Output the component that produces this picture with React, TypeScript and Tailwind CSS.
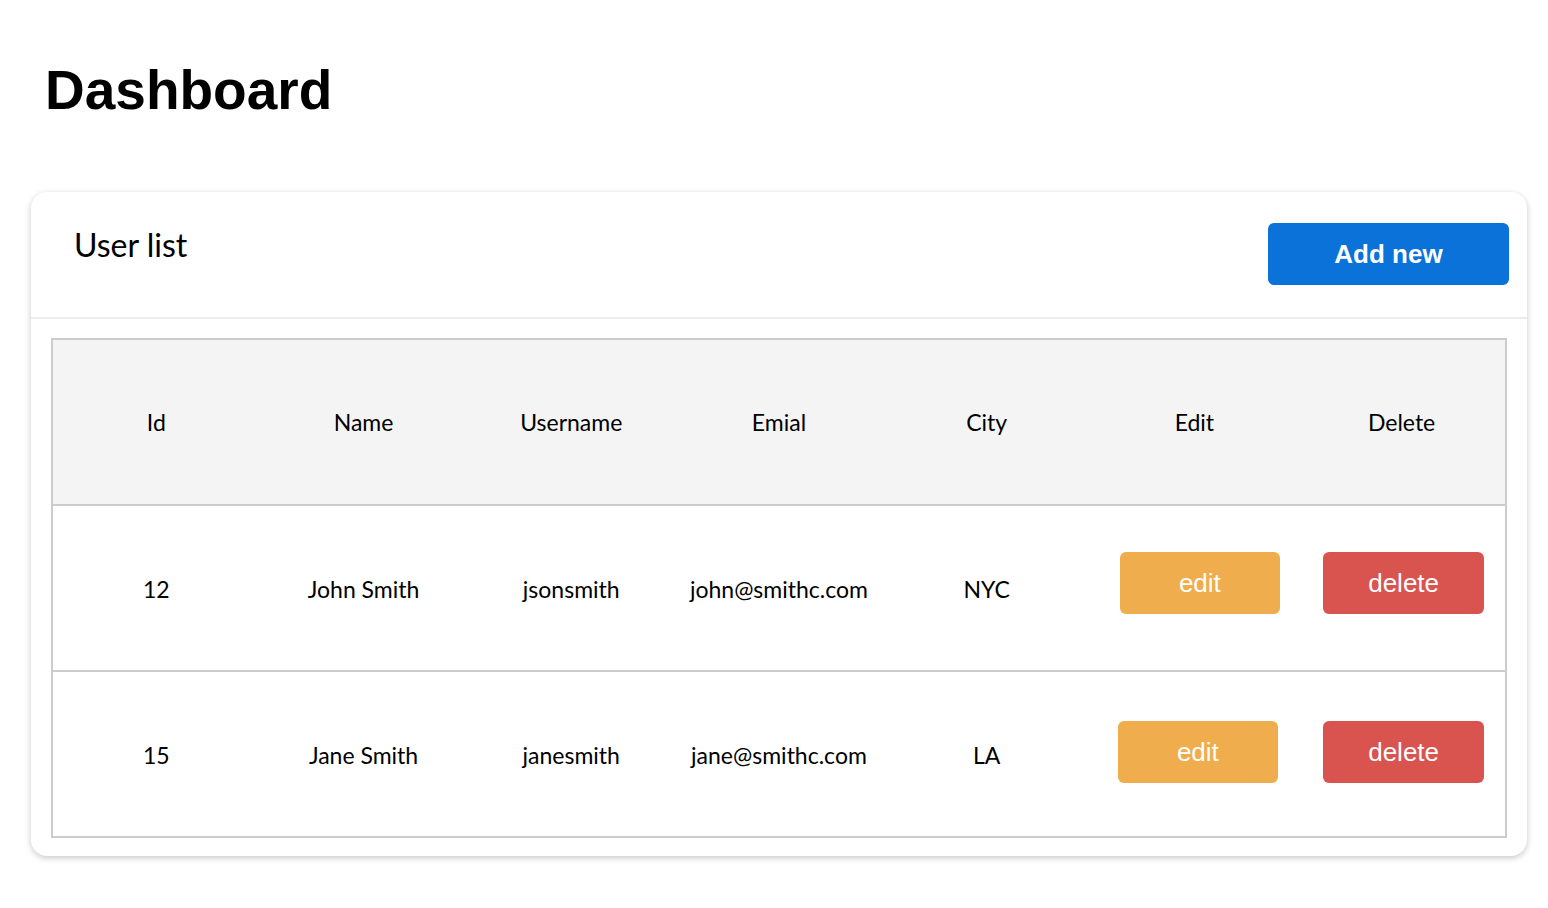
const users = [
  { id: 12, name: "John Smith", username: "jsonsmith", email: "john@smithc.com", city: "NYC", editCell: "pl-[11px] pb-[10px]", deleteCell: "pl-[4px] pb-[10px]" },
  { id: 15, name: "Jane Smith", username: "janesmith", email: "jane@smithc.com", city: "LA", editCell: "pl-[7px] pb-[4px]", deleteCell: "pl-[4px] pb-[4px]" },
];

const headings = ["Id", "Name", "Username", "Emial", "City", "Edit", "Delete"];

function App() {
  return (
    <div className="min-h-[908px] bg-white px-[31px] pt-[58px] pb-[52px]">
      <h1 className="pl-[14px] font-['Liberation_Sans',Arial,sans-serif] text-[55px] font-bold leading-[64px] text-black">
        Dashboard
      </h1>

      <div className="mt-[70px] w-[1496px] rounded-2xl bg-white shadow-[0_2px_6px_rgba(0,0,0,0.22)] font-['Lato',sans-serif]">
        <div className="flex items-start justify-between border-b-2 border-[#ececec] pr-[18px] pl-[43px] pt-[31px] pb-[32px]">
          <h2 className="pt-[2px] text-[32px] leading-[40px] text-black">User list</h2>
          <button className="h-[62px] w-[241px] rounded-md bg-[#0a72d8] font-['Liberation_Sans',Arial,sans-serif] text-[26px] font-bold text-white">
            Add new
          </button>
        </div>

        <div className="px-[20px] pt-[19px] pb-[18px]">
          <table className="w-full table-fixed border-collapse border-2 border-[#cccccc] text-[23px] text-black">
            <thead>
              <tr className="h-[166px] bg-[#f4f4f4]">
                {headings.map((h) => (
                  <th key={h} className="text-center font-normal">
                    {h}
                  </th>
                ))}
              </tr>
            </thead>
            <tbody>
              {users.map((u) => (
                <tr key={u.id} className="h-[166px] border-t-2 border-[#cccccc]">
                  <td className="pt-[2px] text-center">{u.id}</td>
                  <td className="pt-[2px] text-center">{u.name}</td>
                  <td className="pt-[2px] text-center">{u.username}</td>
                  <td className="pt-[2px] text-center">{u.email}</td>
                  <td className="pt-[2px] text-center">{u.city}</td>
                  <td className={`text-center ${u.editCell}`}>
                    <button className="h-[62px] w-[160px] rounded-md bg-[#f0ad4e] font-['Liberation_Sans',Arial,sans-serif] text-[26px] text-white">
                      edit
                    </button>
                  </td>
                  <td className={`text-center ${u.deleteCell}`}>
                    <button className="h-[62px] w-[161px] rounded-md bg-[#d9534f] font-['Liberation_Sans',Arial,sans-serif] text-[26px] text-white">
                      delete
                    </button>
                  </td>
                </tr>
              ))}
            </tbody>
          </table>
        </div>
      </div>
    </div>
  );
}

export default App;
